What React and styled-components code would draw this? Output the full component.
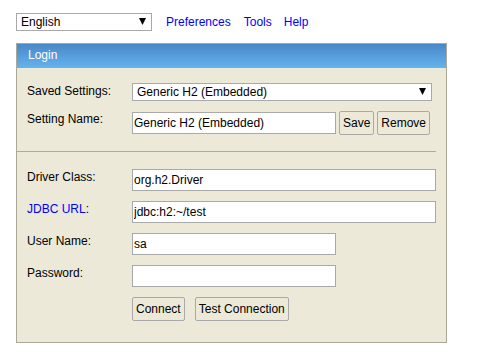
import React from "react";
import styled, { createGlobalStyle } from "styled-components";

const GlobalStyle = createGlobalStyle`
  html, body { margin: 0; padding: 0; background: #ffffff; }
  body {
    font-family: "Liberation Sans", Arial, sans-serif;
    font-size: 12px;
    color: #000000;
  }
`;

const Page = styled.div`
  padding: 13px 0 0 16px;
`;

const TopBar = styled.div`
  display: flex;
  align-items: center;
  height: 18px;
`;

const NavLink = styled.a`
  color: #0000ff;
  text-decoration: none;
  margin-left: ${(p) => p.$gap}px;
  cursor: pointer;
`;

const SelectWrap = styled.div`
  position: relative;
  width: ${(p) => p.$width}px;
  height: 18px;
  flex: none;
`;

const Select = styled.select`
  appearance: none;
  -webkit-appearance: none;
  display: block;
  width: 100%;
  height: 18px;
  box-sizing: border-box;
  margin: 0;
  padding: 0 16px 0 4px;
  border: 1px solid #a9a9a9;
  border-radius: 0;
  background: #ffffff;
  color: #000000;
  font-family: "Liberation Sans", Arial, sans-serif;
  font-size: 12px;
  outline: none;
`;

const Arrow = styled.svg`
  position: absolute;
  right: 6px;
  top: 5px;
  width: 7px;
  height: 7px;
  pointer-events: none;
`;

const Panel = styled.div`
  margin-top: 12px;
  width: 431px;
  box-sizing: border-box;
  border: 1px solid #aca899;
  background: #ece9d8;
`;

const PanelHeader = styled.div`
  height: 24px;
  box-sizing: border-box;
  padding: 4px 11px 0;
  background: linear-gradient(to bottom, #4a87c8, #64b3ef);
  color: #ffffff;
`;

const PanelBody = styled.div`
  padding: 15px 10px 21px;
`;

const FormRow = styled.div`
  display: flex;
  align-items: flex-start;
  margin-top: ${(p) => p.$top || 0}px;
`;

const Label = styled.div`
  width: 105px;
  flex: none;
  padding-top: 1px;
`;

const LinkText = styled.span`
  color: #0000ff;
`;

const Controls = styled.div`
  display: flex;
  align-items: center;
  gap: ${(p) => p.$gap || 0}px;
  height: ${(p) => p.$height}px;
`;

const TextInput = styled.input`
  width: ${(p) => p.$width}px;
  height: 22px;
  box-sizing: border-box;
  margin: 0;
  padding: 0 1px;
  border: 1px solid #a9a9a9;
  border-radius: 0;
  background: #ffffff;
  color: #000000;
  font-family: "Liberation Sans", Arial, sans-serif;
  font-size: 12px;
  outline: none;
`;

const Button = styled.button`
  height: 24px;
  box-sizing: border-box;
  margin: 0;
  padding: 0 3px;
  border: 1px solid #a9a9a9;
  border-radius: 2px;
  background: #ece9d8;
  color: #000000;
  font-family: "Liberation Sans", Arial, sans-serif;
  font-size: 12px;
  cursor: pointer;
`;

const Separator = styled.hr`
  border: none;
  height: 1px;
  background: #aaaaaa;
  margin: 16px 0 17px -10px;
`;

function DropDown({ width, value, options }) {
  return (
    <SelectWrap $width={width}>
      <Select defaultValue={value}>
        {options.map((o) => (
          <option key={o}>{o}</option>
        ))}
      </Select>
      <Arrow viewBox="0 0 7 7">
        <polygon points="0,0 7,0 3.5,7" fill="#000" />
      </Arrow>
    </SelectWrap>
  );
}

export default function App() {
  return (
    <>
      <GlobalStyle />
      <Page>
        <TopBar>
          <DropDown width={136} value="English" options={["English"]} />
          <NavLink $gap={14}>Preferences</NavLink>
          <NavLink $gap={13}>Tools</NavLink>
          <NavLink $gap={12}>Help</NavLink>
        </TopBar>
        <Panel>
          <PanelHeader>Login</PanelHeader>
          <PanelBody>
            <FormRow>
              <Label>Saved Settings:</Label>
              <Controls $height={18}>
                <DropDown
                  width={300}
                  value="Generic H2 (Embedded)"
                  options={["Generic H2 (Embedded)"]}
                />
              </Controls>
            </FormRow>
            <FormRow $top={10}>
              <Label>Setting Name:</Label>
              <Controls $height={24} $gap={3}>
                <TextInput $width={204} defaultValue="Generic H2 (Embedded)" />
                <Button>Save</Button>
                <Button>Remove</Button>
              </Controls>
            </FormRow>
            <Separator />
            <FormRow>
              <Label>Driver Class:</Label>
              <Controls $height={22}>
                <TextInput $width={304} defaultValue="org.h2.Driver" />
              </Controls>
            </FormRow>
            <FormRow $top={10}>
              <Label>
                <LinkText>JDBC URL</LinkText>:
              </Label>
              <Controls $height={22}>
                <TextInput $width={304} defaultValue="jdbc:h2:~/test" />
              </Controls>
            </FormRow>
            <FormRow $top={10}>
              <Label>User Name:</Label>
              <Controls $height={22}>
                <TextInput $width={204} defaultValue="sa" />
              </Controls>
            </FormRow>
            <FormRow $top={10}>
              <Label>Password:</Label>
              <Controls $height={22}>
                <TextInput $width={204} type="password" defaultValue="" />
              </Controls>
            </FormRow>
            <FormRow $top={10}>
              <Label />
              <Controls $height={24} $gap={10}>
                <Button>Connect</Button>
                <Button>Test Connection</Button>
              </Controls>
            </FormRow>
          </PanelBody>
        </Panel>
      </Page>
    </>
  );
}
